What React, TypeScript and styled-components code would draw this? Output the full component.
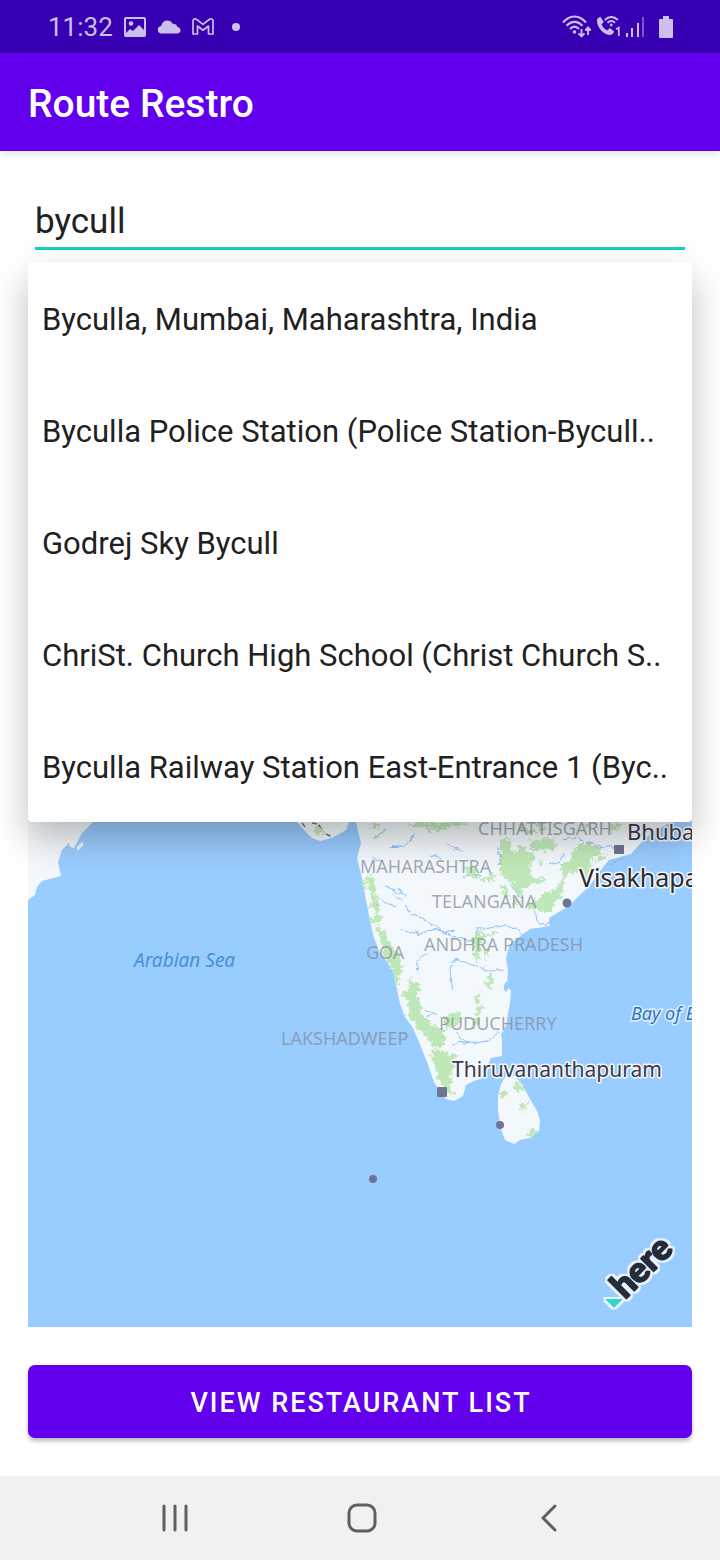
import React, { useState } from "react";
import styled, { createGlobalStyle } from "styled-components";

const GlobalStyle = createGlobalStyle`
  *, *::before, *::after { box-sizing: border-box; }
  body { margin: 0; background: #fff; font-family: Roboto, "Liberation Sans", sans-serif; }
`;

const Screen = styled.div`
  display: flex;
  flex-direction: column;
  min-height: 100vh;
`;

const StatusBar = styled.div`
  display: flex;
  align-items: center;
  justify-content: space-between;
  height: 53px;
  padding: 0 47px 0 48px;
  background: #3700b3;
  color: #cdbfec;
`;

const StatusGroup = styled.div<{ $gap: number }>`
  display: flex;
  align-items: center;
  gap: ${(p) => p.$gap}px;
  svg { display: block; }
`;

const Clock = styled.time`
  font-size: 26px;
  line-height: 32px;
`;

const AppBar = styled.header`
  display: flex;
  align-items: center;
  height: 98px;
  padding: 4px 28px 0;
  background: #6200ee;
  box-shadow: 0 2px 8px rgba(0, 0, 0, 0.14);
`;

const Title = styled.h1`
  margin: 0;
  color: #fff;
  font-size: 39px;
  line-height: 48px;
  font-weight: 500;
`;

const Main = styled.main`
  display: flex;
  flex: 1;
  flex-direction: column;
  padding: 38px 28px;
`;

const SearchBox = styled.div`
  position: relative;
  padding: 0 7px 12px;
`;

const SearchInput = styled.input`
  display: block;
  width: 100%;
  height: 61px;
  padding: 6px 0 0;
  border: 0;
  border-bottom: 3px solid #16cfc0;
  outline: 0;
  background: transparent;
  color: #212121;
  font-family: inherit;
  font-size: 35px;
`;

const Suggestions = styled.ul`
  position: absolute;
  z-index: 2;
  top: 100%;
  left: 0;
  right: 0;
  margin: 0;
  padding: 0;
  list-style: none;
  overflow: hidden;
  border-radius: 4px;
  background: #fff;
  box-shadow: 0 16px 36px rgba(0, 0, 0, 0.26);
`;

const Suggestion = styled.button`
  display: block;
  width: 100%;
  height: 112px;
  padding: 4px 14px 0;
  border: 0;
  background: transparent;
  color: #212121;
  font-family: inherit;
  font-size: 31px;
  line-height: 40px;
  text-align: left;
  white-space: nowrap;
`;

const MapPanel = styled.section`
  flex: 1;
  display: flex;
  min-height: 600px;
  margin-top: 16px;
  background: #99ccff;
`;

const MapSvg = styled.svg`
  display: block;
  flex: 1;
  min-width: 0;
  height: auto;
  font-family: "Noto Sans", "Open Sans", sans-serif;
`;

const ListButton = styled.button`
  height: 73px;
  margin-top: 38px;
  padding: 3px 14px 0 16px;
  border: 0;
  border-radius: 7px;
  background: #6200ee;
  box-shadow: 0 3px 4px rgba(0, 0, 0, 0.28);
  color: #fff;
  font-family: inherit;
  font-size: 27px;
  font-weight: 500;
  letter-spacing: 2px;
`;

const NavBar = styled.nav`
  display: flex;
  height: 84px;
  padding: 0 77px 0 81px;
  background: #f1f1f1;
`;

const NavButton = styled.button`
  display: flex;
  flex: 1;
  align-items: center;
  justify-content: center;
  padding: 0;
  border: 0;
  background: transparent;
  color: #5f5f5f;
`;

const places = [
  "Byculla, Mumbai, Maharashtra, India",
  "Byculla Police Station (Police Station-Bycull..",
  "Godrej Sky Bycull",
  "ChriSt. Church High School (Christ Church S..",
  "Byculla Railway Station East-Entrance 1 (Byc..",
];

const regions = [
  { name: "CHHATTISGARH", x: 478, y: 835 },
  { name: "MAHARASHTRA", x: 360, y: 873 },
  { name: "TELANGANA", x: 432, y: 908 },
  { name: "ANDHRA PRADESH", x: 424, y: 951 },
  { name: "GOA", x: 366, y: 959 },
  { name: "LAKSHADWEEP", x: 281, y: 1045 },
  { name: "PUDUCHERRY", x: 439, y: 1030 },
];

// Rivers and forests are drawn on a grid three times finer than the map.
const rivers = [
  "M75 265l16 6M92 256l24 14 18 2M100 210l40 22 30 12M145 220l22 28M128 235l28 22",
  "M165 268l14 26 40 18 46 26 18 18 18 6",
  "M152 344l26 6 30 8 26 -14 26 0 28 8 26 -4M196 346l14 12M284 352l24 14 40 8 30 4",
  "M378 372l4-34 30 2 44-6 12-4M468 330l34 12 20 24 16 22",
  "M200 438l22-14 20-6M200 440l4 28M300 440l28-4 34 12 42 16 54 2M306 450l-6 14 8 60",
  "M225 586l36 12M228 600l26 2M320 654l20 24 46 6 30-10 32-22M300 692l30-10 26 4",
  "M70 128l24 10M80 60l20-8 8-12M120 95l40-2 24-16 6-20M290 85l30 26M240 120l34 8",
  "M310 95l28 14M340 185l16-4M370 178l24 4M440 100l14 30M450 150l6-12M470 200l26 32 20 24",
  "M556 290l8 34 28 8 6-16M600 150l30-12 14-22M640 75l40-8 30 16 50 12 50 2M780 150l26-16 20-4",
];

const forests = [
  // Western Ghats, north
  "M40 195l16-16 18 4-6 20 12 12-6 20 10 18 2 44 10 10-6 16-14-10 4-22-14-12 8-22-14-10 4-20-12-6 4-12z",
  "M38 200l12 4 0 22-12-4zM60 255l10 8-4 14-10-4zM64 305l14 0-2 20-14-4zM78 330l22 14 6 28 16 12-4 18-16-8-10-24-12-16z",
  // Western Ghats, south
  "M96 385l24 0 28 30 4 30 8 24-12 10 2 34-18-20 2-22-16-22-20-30z",
  "M176 488l12 12 18 2 2 26-6 14 12 16-2 38 22 14 14 20 38 20-2 14 6 26-26 12-30-20-4-20-26-16-10-26-24-14 10-22-6-28-18-14 0-16 20 4z",
  "M246 706l48 4 6 8 24 0-16 20 8 14-12 20 2 30-6 24 16 18-28-10-16-34-10-10-8-40-10-20z",
  // Interior
  "M64 30l18-6 6 10-16 10zM68 58l20-2 0 14-16 2zM170 32l30-10 90 2 20-4 46 8-60 8-40 12-30-4 30-12-60 4z",
  "M346 150l30 6 10 26 18 8 22-14 4 18-30 2-20-8-30-4z",
  "M366 362l24-16 4 14 50-12 8 6-50 14-8 10-8 60-10-4-4-50-14-2zM404 390l10 20-8 44zM414 470l14 10 0 34-12 8-14-18 14 0z",
  "M372 555l14-26 8 16-14 20zM380 575l22-8 0 14-14 20-12 4z",
  "M282 612l20-14 34-12 0 30-20 18-34 4zM370 610l24 4 0 18-30 6z",
  // Eastern hills
  "M450 74l14-8 12 14 4 26 20 2 4-14 14-2 22 26 12-4 0 22-12 16 8 42-12 22-14 4-10 24-14-6-12-38-22-14-16-12 6-24-12-12 14-20-6-30z",
  "M540 72l24 10 16-12 34 4 0 36-20-10-6 12-20-10-24 8zM568 138l10-4 2 16-10 4zM540 190l30-4 20 10-14 12-30-6z",
  "M524 290l16-4-4-18 40-28 30-10 24-20 16 14-16 12 6 10-30 24 0 20-26 2-30-12z",
  "M690 86l30-6 32 20 0 14-30 20-6 50-14 30-8-36-22-10-20 10-10 32-14 2 10-40-6-24 30-16 8-22z",
  "M450 200l24 20 0 30-10-6zM425 170l14 6-4 10-10-4zM486 245l20 20-6 14-14-16zM740 130l34-8-10 12-30 12z",
  "M505 24l30 20 20 2 10 12-34-4-24-18zM560 30l14-4 14 20-14 6zM780 30l34-4-8 20-12-4-10 14zM700 26l24 4-8 10z",
  // Sri Lanka
  "M490 820l4-18 14 0 18 22-16 6zM452 830l16-6 4 10-6 14-16 0zM510 876l8-10 14-4 2-16 6 6-2 16-16 14-6 8zM528 960l10-16 24 0-14 24z",
  "M-112 36l22 2 18 10-14 12-18-4z",
];

function ImageIcon() {
  return (
    <svg width="22" height="20" viewBox="0 0 22 20" aria-hidden="true">
      <rect x="1" y="1" width="20" height="18" rx="1" fill="none" stroke="currentColor" strokeWidth="2" />
      <circle cx="7" cy="6.500" r="2.300" fill="currentColor" />
      <path d="M2 16l4-4 3 2 6-6 6 6v5H2z" fill="currentColor" />
    </svg>
  );
}

function CloudIcon() {
  return (
    <svg width="24" height="14" viewBox="0 0 24 14" aria-hidden="true">
      <path d="M4 13.500a3.800 3.800 0 0 1 0-7.500C5 2.500 7.300.5 10.200.5c2.600 0 4.300 1.200 5.500 3.300 2.500-.2 4.300 1.200 4.700 3.300 1.900.2 3.100 1.500 3.100 3.200 0 1.800-1.300 3.200-3.200 3.200z" fill="currentColor" />
    </svg>
  );
}

function MailIcon() {
  return (
    <svg width="22" height="17" viewBox="0 0 22 17" aria-hidden="true">
      <path d="M1 3C1 1 3.300.3 4.800 1.500L11 6.300l6.200-4.800C18.700.3 21 1 21 3v13h-4.500V8L11 12.200 5.500 8v8H1z" fill="none" stroke="currentColor" strokeWidth="1.700" strokeLinejoin="round" />
    </svg>
  );
}

function WifiIcon() {
  return (
    <svg width="30" height="23" viewBox="0 0 30 23" fill="none" stroke="currentColor" strokeWidth="2.200" aria-hidden="true">
      <path d="M1 7.500C8-.5 17-.5 24 7.500M4.500 10.800c5-5.300 11-5.300 16 0M8 14c3-3 6-3 9 0" />
      <circle cx="12.500" cy="17" r="1.800" fill="currentColor" stroke="none" />
      <path d="M19.500 14v7M16.500 18.300l3 3 3-3M26 20v-7M23.300 15.500l2.700-3 2.700 3" strokeWidth="1.900" />
    </svg>
  );
}

function WifiCallIcon() {
  return (
    <svg width="26" height="21" viewBox="0 0 26 21" aria-hidden="true">
      <path d="M1.200 2.800L4.200.8l3.600 5-2.300 2.700c1.200 2.600 3 4.500 5.700 5.900l2.600-2.300 4.300 3.400c-.7 2.300-2.300 3.500-4.700 3.500C6.800 18.500-.2 10 1.200 2.800z" fill="currentColor" />
      <path d="M8.800 4c4-4 9-4 13 0M11.500 6.800c2.500-2.300 5-2.300 7.500 0" fill="none" stroke="currentColor" strokeWidth="2" />
      <circle cx="15.200" cy="9" r="1.400" fill="currentColor" />
      <path d="M20 13.200l2.800-1.500V20" fill="none" stroke="currentColor" strokeWidth="1.700" />
    </svg>
  );
}

function SignalIcon() {
  return (
    <svg width="19" height="20" viewBox="0 0 19 20" fill="currentColor" aria-hidden="true">
      <rect x="0" y="16" width="2" height="4" />
      <rect x="5" y="11" width="2" height="9" />
      <rect x="11" y="6" width="2" height="14" />
      <rect x="16" y="0" width="2" height="20" opacity="0.450" />
    </svg>
  );
}

function BatteryIcon() {
  return (
    <svg width="14" height="22" viewBox="0 0 14 22" fill="currentColor" aria-hidden="true">
      <path d="M4 0h6v3h3a1 1 0 0 1 1 1v17a1 1 0 0 1-1 1H1a1 1 0 0 1-1-1V4a1 1 0 0 1 1-1h3z" />
    </svg>
  );
}

function MapView() {
  return (
    <MapSvg viewBox="28 278 664 1049" preserveAspectRatio="xMidYMax slice" role="img" aria-label="Map of southern India">
      <defs>
        <filter id="rough" x="-10%" y="-10%" width="120%" height="120%">
          <feTurbulence type="fractalNoise" baseFrequency="0.25" numOctaves="3" seed="4" />
          <feDisplacementMap in="SourceGraphic" scale="10" xChannelSelector="R" yChannelSelector="G" />
        </filter>
        <filter id="wiggle" x="-10%" y="-10%" width="120%" height="120%">
          <feTurbulence type="fractalNoise" baseFrequency="0.15" numOctaves="2" seed="8" />
          <feDisplacementMap in="SourceGraphic" scale="6" xChannelSelector="R" yChannelSelector="G" />
        </filter>
        <filter id="halo" x="-20%" y="-50%" width="140%" height="200%">
          <feMorphology in="SourceAlpha" operator="dilate" radius="1.500" result="grown" />
          <feFlood floodColor="#e8f4ff" />
          <feComposite in2="grown" operator="in" result="edge" />
          <feMerge>
            <feMergeNode in="edge" />
            <feMergeNode in="SourceGraphic" />
          </feMerge>
        </filter>
      </defs>
      <rect x="28" y="262" width="664" height="1065" fill="#99ccff" />
      <g fill="#f3f8fc">
        <path d="M28 780H110L93 822l-11 11-8 15-4-1-1-4-7 7-4 12 3 14-19 5-5 6-2 8-7 5z" />
        <path d="M77 851v-4l6-6v5z" />
        <path d="M290 800l7 22 7 8 8 8 8 3 12-3 14-8 3-8V800z" />
        <path d="M356 800v22l5 21-4 15 5 20 4 22 5 25 3 13 6 15 8 10 6 11 3 15 3 15 5 13 8 11 6 14 8 20 7 20 6 10 6 7 8 2 9-5 3-11 8-4 12-4 3-15 2-4 11-2v-17l-1-4 5-10 4-22 1-12-4-5 1-16-2-12 4-14 20-15 20-3-1-8 20-12 22-22 9-13 9-11 22-6 8-9 10-10 20-12 14-7V800z" />
        <path d="M507 1074l8 2 8 10 7 13 7 12 3 9-1 11-9 7-10 2-6 4-9-4-4-11-3-18v-15l3-12z" />
      </g>
      <g fill="#c0e7b8" filter="url(#rough)">
        <g transform="translate(350 815) scale(0.3333)">
          {forests.map((d) => <path key={d} d={d} />)}
        </g>
      </g>
      <g fill="none" stroke="#80b8f4" strokeWidth="3" opacity="0.900" filter="url(#wiggle)">
        <g transform="translate(350 815) scale(0.3333)">
          {rivers.map((d) => <path key={d} d={d} />)}
        </g>
      </g>
      <path d="M506 982c3 1 3 7 0 10-3-2-3-7 0-10z" fill="#99ccff" />
      <path d="M302 823l4 5M312 823l6 1 3 4M326 834l6 3" fill="none" stroke="#77717e" strokeWidth="1.500" strokeDasharray="5 2" />

      <g fontSize="18" fill="#868e99" fillOpacity="0.750">
        {regions.map((r) => <text key={r.name} x={r.x} y={r.y}>{r.name}</text>)}
      </g>
      <g fontStyle="italic" fill="#4a90d2">
        <text x="134" y="967" fontSize="19">Arabian Sea</text>
        <text x="631" y="1020" fontSize="18" fill="#2f72bd" stroke="#e0efff" strokeWidth="3" paintOrder="stroke">Bay of B</text>
      </g>
      <g fill="#3a3a4c" stroke="#f3f8fc" strokeWidth="3" strokeLinejoin="round" paintOrder="stroke">
        <text x="627" y="840" fontSize="22">Bhuba</text>
        <text x="579" y="887" fontSize="25" fill="#2c2c30">Visakhapa</text>
        <text x="452" y="1077" fontSize="21">Thiruvananthapuram</text>
      </g>
      <g fill="#6d7590">
        <rect x="614" y="845" width="10" height="9" rx="1" />
        <rect x="437" y="1087" width="10" height="10" rx="1" />
        <circle cx="567" cy="903" r="4.500" />
        <circle cx="500" cy="1125" r="4" />
        <circle cx="373" cy="1179" r="4" />
      </g>
      <g filter="url(#halo)">
        <path d="M605 1299h18l-9 9z" fill="#33d6c8" />
        <text transform="translate(625 1300) rotate(-45)" fontFamily="Lato, sans-serif" fontWeight="900" fontSize="35" fill="#272d3a" stroke="#272d3a" strokeWidth="2" strokeLinejoin="round">here</text>
      </g>
    </MapSvg>
  );
}

export default function App() {
  const [query, setQuery] = useState("bycull");
  return (
    <>
      <GlobalStyle />
      <Screen>
        <StatusBar>
          <StatusGroup $gap={11}>
            <Clock>11:32</Clock>
            <ImageIcon />
            <CloudIcon />
            <MailIcon />
            <svg width="22" height="8" viewBox="0 0 22 8" aria-hidden="true">
              <circle cx="11" cy="4" r="4" fill="currentColor" />
            </svg>
          </StatusGroup>
          <StatusGroup $gap={4}>
            <WifiIcon />
            <WifiCallIcon />
            <SignalIcon />
            <svg width="6" height="1" aria-hidden="true" />
            <BatteryIcon />
          </StatusGroup>
        </StatusBar>
        <AppBar>
          <Title>Route Restro</Title>
        </AppBar>
        <Main>
          <SearchBox>
            <SearchInput
              type="text"
              aria-label="Search place"
              value={query}
              onChange={(e) => setQuery(e.target.value)}
            />
            <Suggestions>
              {places.map((place) => (
                <li key={place}>
                  <Suggestion type="button" onClick={() => setQuery(place)}>{place}</Suggestion>
                </li>
              ))}
            </Suggestions>
          </SearchBox>
          <MapPanel>
            <MapView />
          </MapPanel>
          <ListButton type="button">VIEW RESTAURANT LIST</ListButton>
        </Main>
        <NavBar>
          <NavButton type="button" aria-label="Recent apps">
            <svg width="26" height="28" viewBox="0 0 26 28" fill="none" stroke="currentColor" strokeWidth="3" strokeLinecap="round" aria-hidden="true">
              <path d="M2 2v24M13 2v24M24 2v24" />
            </svg>
          </NavButton>
          <NavButton type="button" aria-label="Home">
            <svg width="30" height="30" viewBox="0 0 30 30" fill="none" stroke="currentColor" strokeWidth="3" aria-hidden="true">
              <rect x="2" y="2" width="26" height="26" rx="8" />
            </svg>
          </NavButton>
          <NavButton type="button" aria-label="Back">
            <svg width="16" height="28" viewBox="0 0 16 28" fill="none" stroke="currentColor" strokeWidth="3" strokeLinecap="round" aria-hidden="true">
              <path d="M14 2L2 14l12 12" />
            </svg>
          </NavButton>
        </NavBar>
      </Screen>
    </>
  );
}
